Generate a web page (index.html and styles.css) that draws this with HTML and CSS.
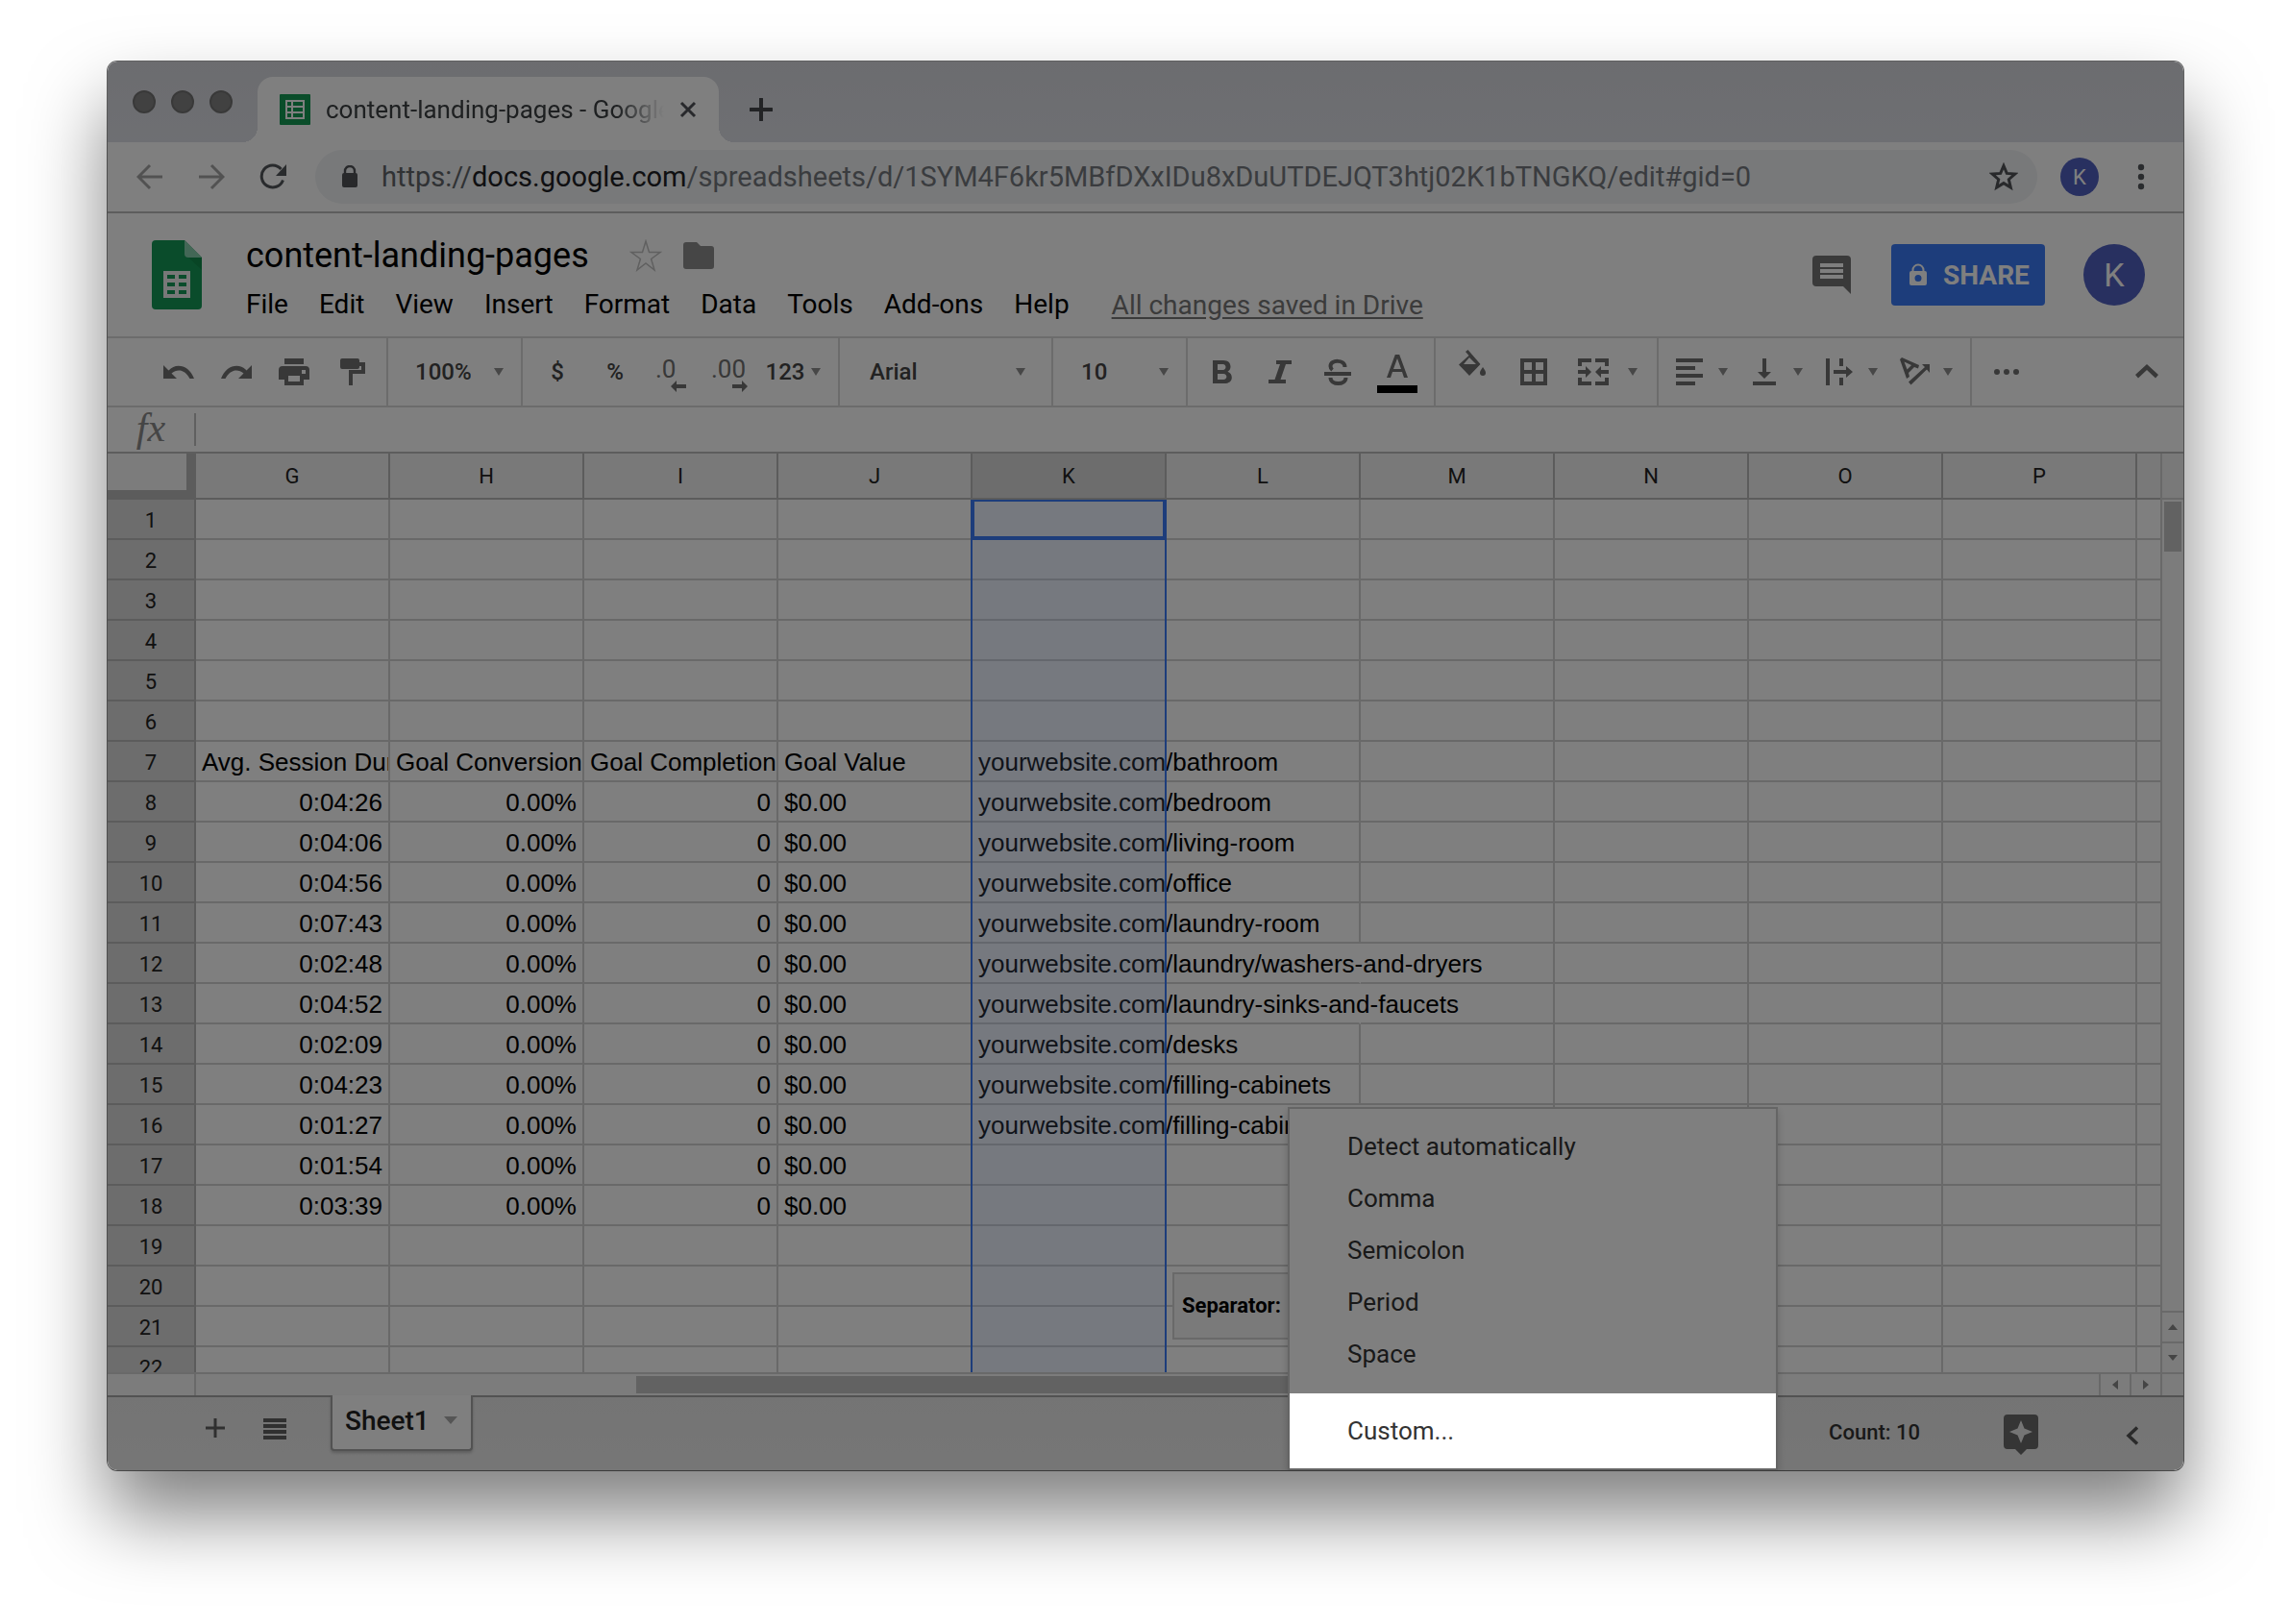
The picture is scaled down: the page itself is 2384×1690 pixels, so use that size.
FILE: index.html
```html
<!DOCTYPE html>
<html lang="en">
<head>
<meta charset="utf-8">
<title>content-landing-pages - Google Sheets</title>
<link rel="stylesheet" href="styles.css">
</head>
<body>
<svg width="0" height="0" class="defs" aria-hidden="true">
  <symbol id="caret" viewBox="0 0 12 10"><path d="M1 1h10L6 9z"/></symbol>
</svg>
<div class="window">
  <header class="tabstrip">
    <div class="lights"><i></i><i></i><i></i></div>
    <div class="tab">
      <svg class="favicon" viewBox="0 0 32 32"><rect width="32" height="32" rx="1" fill="#149a55"/><path fill="#fff" d="M6 6h20v20H6z"/><path fill="#149a55" d="M8 8h4v4H8zM14 8h10v4H14zM8 14h4v4H8zM14 14h10v4H14zM8 20h4v4H8zM14 20h10v4H14z"/></svg>
      <span class="tab-title">content-landing-pages - Google Sheets</span>
      <button class="plain" aria-label="Close tab"><svg width="18" height="18" viewBox="0 0 18 18"><path d="M2 2l14 14M16 2L2 16" stroke="#505258" stroke-width="3"/></svg></button>
    </div>
    <button class="plain new-tab" aria-label="New tab"><svg width="24" height="24" viewBox="0 0 24 24"><path d="M12 1v22M1 12h22" stroke="#44464a" stroke-width="4" stroke-linecap="round"/></svg></button>
  </header>

  <div class="navbar">
    <button class="plain nav" aria-label="Back"><svg width="28" height="28" viewBox="0 0 28 28"><path d="M27 14H3M14 2L2 14l12 12" fill="none" stroke="#a5a5a5" stroke-width="3"/></svg></button>
    <button class="plain nav" aria-label="Forward"><svg width="28" height="28" viewBox="0 0 28 28"><path d="M1 14h24M14 2l12 12-12 12" fill="none" stroke="#a5a5a5" stroke-width="3"/></svg></button>
    <button class="plain nav" aria-label="Reload"><svg width="28" height="28" viewBox="0 0 28 28"><path d="M24.500 17.500A11.500 11.500 0 1 1 22.500 6" fill="none" stroke="#53565b" stroke-width="3"/><path d="M28 1v12H17z" fill="#53565b"/></svg></button>
    <div class="omnibox">
      <svg width="18" height="24" viewBox="0 0 18 24"><path d="M4 9V6a5 5 0 0 1 10 0v3" fill="none" stroke="#505357" stroke-width="2.400"/><rect x="1" y="8" width="16" height="15" rx="2" fill="#505357"/></svg>
      <span class="url"><span class="scheme">https://</span><span class="host">docs.google.com</span>/spreadsheets/d/1SYM4F6kr5MBfDXxIDu8xDuUTDEJQT3htj02K1bTNGKQ/edit#gid=0</span>
      <button class="plain" aria-label="Bookmark"><svg width="30" height="30" viewBox="0 0 30 30"><path d="M15 3.500l3.300 7.900 8.500.7-6.500 5.600 2 8.300-7.300-4.400L7.700 26l2-8.300-6.500-5.600 8.500-.7z" fill="none" stroke="#505357" stroke-width="3"/></svg></button>
    </div>
    <button class="plain avatar small">K</button>
    <button class="plain kebab" aria-label="Menu"><svg width="8" height="28" viewBox="0 0 8 28"><circle cx="4" cy="4" r="3.200"/><circle cx="4" cy="14" r="3.200"/><circle cx="4" cy="24" r="3.200"/></svg></button>
  </div>

  <div class="dochead">
    <svg class="logo" width="52" height="72" viewBox="0 0 52 72"><path d="M4 0h30l18 18v50a4 4 0 0 1-4 4H4a4 4 0 0 1-4-4V4a4 4 0 0 1 4-4z" fill="#159957"/><path d="M37 17l15 14V18z" fill="#118a4b"/><path d="M34 0l18 18H38a4 4 0 0 1-4-4z" fill="#87ceac"/><path d="M12 32h28v28H12z" fill="#f1f1f1"/><path d="M16 36h8v4h-8zM28 36h8v4h-8zM16 44h8v4h-8zM28 44h8v4h-8zM16 52h8v4h-8zM28 52h8v4h-8z" fill="#159957"/></svg>
    <div class="docinfo">
      <div class="titleline">
        <h1>content-landing-pages</h1>
        <button class="plain" aria-label="Star"><svg width="34" height="34" viewBox="0 0 34 34"><path d="M17 2l3.500 11.500H32l-9.400 7L26 32l-9-7-9 7 3.400-11.500-9.400-7h11.500z" fill="none" stroke="#c0c0c0" stroke-width="1.500"/></svg></button>
        <button class="plain" aria-label="Move to folder"><svg width="32" height="28" viewBox="0 0 32 28"><path d="M3 0h11l4 4h11a3 3 0 0 1 3 3v18a3 3 0 0 1-3 3H3a3 3 0 0 1-3-3V3a3 3 0 0 1 3-3z" fill="#8c8c8c"/></svg></button>
      </div>
      <nav class="menubar">
        <button class="plain">File</button><button class="plain">Edit</button><button class="plain">View</button><button class="plain">Insert</button><button class="plain">Format</button><button class="plain">Data</button><button class="plain">Tools</button><button class="plain">Add-ons</button><button class="plain">Help</button>
        <a href="#history">All changes saved in Drive</a>
      </nav>
    </div>
    <div class="docactions">
      <button class="plain comments" aria-label="Comments"><svg width="40" height="40" viewBox="0 0 40 40"><path d="M4 0h32a4 4 0 0 1 4 4v36l-8-8H4a4 4 0 0 1-4-4V4a4 4 0 0 1 4-4z" fill="#757575"/><path d="M8 8h24v4H8zM8 14h24v4H8zM8 20h24v4H8z" fill="#fff"/></svg></button>
      <button class="share"><svg width="18" height="24" viewBox="0 0 18 24"><path d="M3.500 9V7a5.500 5.500 0 0 1 11 0v2" fill="none" stroke="#fff" stroke-width="2"/><path fill="#fff" fill-rule="evenodd" d="M2 8h14a2 2 0 0 1 2 2v11a2 2 0 0 1-2 2H2a2 2 0 0 1-2-2V10a2 2 0 0 1 2-2zm7 4a3.500 3.500 0 1 0 0 7 3.500 3.500 0 0 0 0-7z"/></svg>SHARE</button>
      <button class="plain avatar">K</button>
    </div>
  </div>

  <div class="toolbar">
    <div class="group g-edit">
      <button class="tool" aria-label="Undo"><svg class="ic" viewBox="0 0 36 36"><path d="M2 11v14h14l-5.500-5.500c6-5 14-4 19 5.500h4.500C29 11 15 8 7.500 16.500z"/></svg></button>
      <button class="tool" aria-label="Redo"><svg class="ic" viewBox="0 0 36 36"><path d="M34 11v14H20l5.500-5.500c-6-5-14-4-19 5.500H2C7 11 21 8 28.500 16.500z"/></svg></button>
      <button class="tool" aria-label="Print"><svg class="ic" viewBox="0 0 36 36"><path d="M8 4h20v6H8z"/><path fill-rule="evenodd" d="M6 12h24a4 4 0 0 1 4 4v10h-6v6H8v-6H2V16a4 4 0 0 1 4-4zm6 10v6h12v-6zm14-6v4h4v-4z"/></svg></button>
      <button class="tool" aria-label="Paint format"><svg class="ic" viewBox="-2 0 36 36"><path d="M6 4h16a2 2 0 0 1 2 2v2h6v12H17v12h-4V16h13v-4h-2v1a2 2 0 0 1-2 2H6a2 2 0 0 1-2-2V6a2 2 0 0 1 2-2z"/></svg></button>
    </div>
    <div class="group g-zoom"><select aria-label="Zoom"><option>100%</option></select><svg class="caret"><use href="#caret"/></svg></div>
    <div class="group g-format">
      <button class="tool txt">$</button>
      <button class="tool txt">%</button>
      <button class="tool" aria-label="Decrease decimal places"><svg class="ic" viewBox="0 0 36 36"><text x="0" y="24">.0</text><path d="M16 33l6-6v4h10v4H22v4z"/></svg></button>
      <button class="tool" aria-label="Increase decimal places"><svg class="ic" viewBox="0 0 36 36"><text x="-2" y="24">.00</text><path d="M36 33l-6-6v4H20v4h10v4z"/></svg></button>
      <button class="tool txt more-formats">123<svg class="caret"><use href="#caret"/></svg></button>
    </div>
    <div class="group g-font"><select aria-label="Font"><option>Arial</option></select><svg class="caret"><use href="#caret"/></svg></div>
    <div class="group g-size"><select aria-label="Font size"><option>10</option></select><svg class="caret"><use href="#caret"/></svg></div>
    <div class="group g-style">
      <button class="tool" aria-label="Bold"><svg class="ic" viewBox="0 0 36 36"><path fill-rule="evenodd" d="M8 6h11c5 0 7.500 2.800 7.500 6.500 0 2.500-1.200 4.200-3 5.200 2.600 1 4.300 3 4.300 6 0 4-3 6.300-7.800 6.300H8zm5 4v6h5.500c4 0 4-6 0-6zm0 10v6h6c4.500 0 4.500-6 0-6z"/></svg></button>
      <button class="tool" aria-label="Italic"><svg class="ic" viewBox="0 0 36 36"><path d="M14 6h16v4h-6l-5.500 16H24v4H6v-4h6.500L18 10h-4z"/></svg></button>
      <button class="tool" aria-label="Strikethrough"><svg class="ic" viewBox="0 0 36 36"><path d="M4 18h28v4H4z"/><path d="M25.500 13C25.500 5 10.500 5 10.500 12q0 2.500 2 4M10.500 24c0 8 16 8 16 0" fill="none" stroke="#707070" stroke-width="4"/></svg></button>
      <button class="tool wide" aria-label="Text color"><svg width="42" height="44" viewBox="0 0 42 44"><path fill-rule="evenodd" d="M18.800 4h4.400L32 28h-4l-2-6H16l-2 6h-4zM21 8l-4 11h8z"/><path d="M0 36h42v8H0z" fill="#000"/></svg></button>
    </div>
    <div class="group g-cell">
      <button class="tool wide" aria-label="Fill color"><svg class="ic raised" viewBox="0 0 36 36"><path fill-rule="evenodd" d="M11 3l2.500-2L26.500 16 15 28 4 16.500 14.500 7zM15 9l-6 7h13z"/><path d="M29 19c2 3 3 4.500 3 6a3 3 0 0 1-6 0c0-1.500 1-3 3-6z"/></svg></button>
      <button class="tool wide" aria-label="Borders"><svg class="ic" viewBox="0 0 36 36"><path fill-rule="evenodd" d="M4 4h28v28H4zm4 4v8h8V8zm12 0v8h8V8zM8 20v8h8v-8zm12 0v8h8v-8z"/></svg></button>
      <button class="tool" aria-label="Merge cells"><svg class="ic" viewBox="0 0 36 36"><path d="M2 4h14v4H6v4H2zM20 4h14v8h-4V8H20zM2 24h4v4h10v4H2zM30 24h4v8H20v-4h10zM2 16h8v-4l6 6-6 6v-4H2zM34 16h-8v-4l-6 6 6 6v-4h8z"/></svg></button>
      <svg class="caret"><use href="#caret"/></svg>
    </div>
    <div class="group g-align">
      <button class="pair" aria-label="Horizontal align"><svg class="ic" viewBox="0 0 36 36"><path d="M4 4h28v4H4zM4 12h20v4H4zM4 20h28v4H4zM4 28h20v4H4z"/></svg><svg class="caret"><use href="#caret"/></svg></button>
      <button class="pair" aria-label="Vertical align"><svg class="ic" viewBox="0 0 36 36"><path d="M16 4h4v14h5l-7 7-7-7h5zM6 28h24v4H6z"/></svg><svg class="caret"><use href="#caret"/></svg></button>
      <button class="pair" aria-label="Text wrapping"><svg class="ic" viewBox="0 0 36 36"><path d="M4 4h4v28H4zM18 4h4v8h-4zM18 24h4v8h-4zM12 16h13v-4l7 6-7 6v-4H12z"/></svg><svg class="caret"><use href="#caret"/></svg></button>
      <button class="pair" aria-label="Text rotation"><svg class="ic" viewBox="0 0 36 36"><path fill-rule="evenodd" d="M5 3l18 8-1 3.500-4-1.500-6 6 1 4-3 2L3 5zM7.500 7.500l3 8 4.500-4.500z"/><path d="M12 28.500L29 13l-3-3h8v9l-3-3.500-16.500 16z"/></svg><svg class="caret"><use href="#caret"/></svg></button>
    </div>
    <button class="tool" aria-label="More"><svg class="ic" viewBox="0 0 36 36"><circle cx="8" cy="18" r="3"/><circle cx="18" cy="18" r="3"/><circle cx="28" cy="18" r="3"/></svg></button>
    <button class="tool collapse" aria-label="Hide the menus"><svg class="ic" viewBox="0 0 36 36"><path d="M18 10l12 11-3 3.500L18 16l-9 8.500L6 21z"/></svg></button>
  </div>

  <div class="formula"><label for="fx">fx</label><input id="fx" type="text"></div>

  <div class="sheet">
    <div class="grid">
      <table>
        <colgroup><col class="c-row"><col span="10" class="c-data"><col></colgroup>
        <thead><tr><td class="corner"><th>G<th>H<th>I<th>J<th class="on">K<th>L<th>M<th>N<th>O<th>P<th></tr></thead>
        <tbody>
          <tr><th>1<td><td><td><td><td><td><td><td><td><td><td></tr>
          <tr><th>2<td><td><td><td><td><td><td><td><td><td><td></tr>
          <tr><th>3<td><td><td><td><td><td><td><td><td><td><td></tr>
          <tr><th>4<td><td><td><td><td><td><td><td><td><td><td></tr>
          <tr><th>5<td><td><td><td><td><td><td><td><td><td><td></tr>
          <tr><th>6<td><td><td><td><td><td><td><td><td><td><td></tr>
          <tr><th>7<td class="cut">Avg. Session Duration<td class="cut">Goal Conversion Rate<td class="cut">Goal Completions<td>Goal Value<td class="spill">yourwebsite.com/bathroom<td><td><td><td><td><td></tr>
          <tr><th>8<td class="num">0:04:26<td class="num">0.00%<td class="num">0<td>$0.00<td class="spill">yourwebsite.com/bedroom<td><td><td><td><td><td></tr>
          <tr><th>9<td class="num">0:04:06<td class="num">0.00%<td class="num">0<td>$0.00<td class="spill">yourwebsite.com/living-room<td><td><td><td><td><td></tr>
          <tr><th>10<td class="num">0:04:56<td class="num">0.00%<td class="num">0<td>$0.00<td class="spill">yourwebsite.com/office<td><td><td><td><td><td></tr>
          <tr><th>11<td class="num">0:07:43<td class="num">0.00%<td class="num">0<td>$0.00<td class="spill">yourwebsite.com/laundry-room<td><td><td><td><td><td></tr>
          <tr><th>12<td class="num">0:02:48<td class="num">0.00%<td class="num">0<td>$0.00<td class="spill">yourwebsite.com/laundry/washers-and-dryers<td class="under"><td><td><td><td><td></tr>
          <tr><th>13<td class="num">0:04:52<td class="num">0.00%<td class="num">0<td>$0.00<td class="spill">yourwebsite.com/laundry-sinks-and-faucets<td class="under"><td><td><td><td><td></tr>
          <tr><th>14<td class="num">0:02:09<td class="num">0.00%<td class="num">0<td>$0.00<td class="spill">yourwebsite.com/desks<td><td><td><td><td><td></tr>
          <tr><th>15<td class="num">0:04:23<td class="num">0.00%<td class="num">0<td>$0.00<td class="spill">yourwebsite.com/filling-cabinets<td><td><td><td><td><td></tr>
          <tr><th>16<td class="num">0:01:27<td class="num">0.00%<td class="num">0<td>$0.00<td class="spill">yourwebsite.com/filling-cabinets<td class="under"><td><td><td><td><td></tr>
          <tr><th>17<td class="num">0:01:54<td class="num">0.00%<td class="num">0<td>$0.00<td><td><td><td><td><td><td></tr>
          <tr><th>18<td class="num">0:03:39<td class="num">0.00%<td class="num">0<td>$0.00<td><td><td><td><td><td><td></tr>
          <tr><th>19<td><td><td><td><td><td><td><td><td><td><td></tr>
          <tr><th>20<td><td><td><td><td><td><td><td><td><td><td></tr>
          <tr><th>21<td><td><td><td><td><td><td><td><td><td><td></tr>
          <tr><th>22<td><td><td><td><td><td><td><td><td><td><td></tr>
        </tbody>
      </table>
      <div class="selection"><div class="active"></div></div>
      <div class="separator">Separator:</div>
    </div>
    <div class="vscroll">
      <div class="vhead"></div>
      <div class="vtrack"><div class="vthumb"></div></div>
      <button class="step" aria-label="Scroll up"><svg width="12" height="8" viewBox="0 0 12 8"><path d="M1 7h10L6 1z"/></svg></button>
      <button class="step" aria-label="Scroll down"><svg width="12" height="8" viewBox="0 0 12 8"><path d="M1 1h10L6 7z"/></svg></button>
    </div>
  </div>

  <div class="hscroll">
    <div class="hhead"></div>
    <div class="htrack"><div class="hthumb"></div></div>
    <button class="step" aria-label="Scroll left"><svg width="8" height="12" viewBox="0 0 8 12"><path d="M7 1v10L1 6z"/></svg></button>
    <button class="step" aria-label="Scroll right"><svg width="8" height="12" viewBox="0 0 8 12"><path d="M1 1v10l6-5z"/></svg></button>
    <div class="hcorner"></div>
  </div>

  <footer class="bottombar">
    <button class="plain add" aria-label="Add sheet"><svg width="20" height="20" viewBox="0 0 20 20"><path d="M8.500 0h3v8.500H20v3h-8.500V20h-3v-8.500H0v-3h8.500z" fill="#606060"/></svg></button>
    <button class="plain all" aria-label="All sheets"><svg width="24" height="24" viewBox="0 0 24 24"><path d="M0 1h24v4H0zM0 7h24v4H0zM0 13h24v4H0zM0 19h24v4H0z" fill="#606060"/></svg></button>
    <button class="sheet-tab">Sheet1<svg width="14" height="8" viewBox="0 0 14 8"><path d="M0 0h14L7 8z" fill="#aaa"/></svg></button>
    <span class="count">Count: 10</span>
    <button class="plain explore" aria-label="Explore"><svg width="36" height="42" viewBox="0 0 36 42"><path d="M4 0h28a4 4 0 0 1 4 4v28a4 4 0 0 1-4 4h-8l-6 6-6-6H4a4 4 0 0 1-4-4V4a4 4 0 0 1 4-4z" fill="#6a6a6a"/><path d="M18 6l3.500 8.500L30 18l-8.500 3.500L18 30l-3.500-8.500L6 18l8.500-3.500z" fill="#ebebeb"/></svg></button>
    <button class="plain side" aria-label="Show side panel"><svg width="14" height="20" viewBox="0 0 14 20"><path d="M12 1.500L3 10l9 8.500" fill="none" stroke="#555" stroke-width="3.500"/></svg></button>
  </footer>

  <div class="menu" role="menu">
    <div class="menu-part">
      <button role="menuitem">Detect automatically</button>
      <button role="menuitem">Comma</button>
      <button role="menuitem">Semicolon</button>
      <button role="menuitem">Period</button>
      <button role="menuitem">Space</button>
    </div>
    <div class="menu-part spotlight"><button role="menuitem">Custom...</button></div>
  </div>
</div>
</body>
</html>
```
FILE: styles.css
```css
* { box-sizing: border-box; }

body {
  margin: 0;
  height: 100vh;
  padding: 64px 112px 160px;
  background: #fff;
  font-family: Roboto, Arial, sans-serif;
  color: #000;
}

.defs { position: absolute; }
svg { display: block; flex: none; }
button { font-family: inherit; color: inherit; }

.plain, .tool, .pair, .step {
  display: flex;
  align-items: center;
  justify-content: center;
  padding: 0;
  border: 0;
  background: none;
}

.window {
  position: relative;
  display: flex;
  flex-direction: column;
  height: 100%;
  overflow: hidden;
  border-radius: 10px;
  background: #fff;
  box-shadow: 0 0 0 1px rgba(0, 0, 0, .6), 0 46px 80px rgba(0, 0, 0, .5);
}

/* dims everything except the spotlighted menu entry */
.window::after {
  content: "";
  position: absolute;
  inset: 0;
  z-index: 5;
  background: rgba(0, 0, 0, .5);
  pointer-events: none;
}

/* browser tabs */
.tabstrip {
  display: flex;
  align-items: flex-end;
  flex: none;
  height: 84px;
  background: linear-gradient(#d8d9df, #dddfe6);
}
.lights { display: flex; gap: 16px; padding: 0 26px 30px 26px; }
.lights i {
  width: 24px;
  height: 24px;
  border: 2px solid #727272;
  border-radius: 50%;
  background: #838383;
}
.tab {
  position: relative;
  display: flex;
  align-items: center;
  width: 480px;
  height: 68px;
  padding: 0 23px;
  border-radius: 16px 16px 0 0;
  background: #fff;
}
.tab::before, .tab::after {
  content: "";
  position: absolute;
  bottom: 0;
  width: 16px;
  height: 16px;
}
.tab::before { right: 100%; background: radial-gradient(circle at 0 0, transparent 16px, #fff 16px); }
.tab::after { left: 100%; background: radial-gradient(circle at 100% 0, transparent 16px, #fff 16px); }
.favicon { width: 32px; height: 32px; }
.tab-title {
  flex: 1;
  margin: 0 16px;
  overflow: hidden;
  white-space: nowrap;
  font-size: 26px;
  color: #3c4043;
  -webkit-mask-image: linear-gradient(to left, transparent, #000 50px);
  mask-image: linear-gradient(to left, transparent, #000 50px);
}
.new-tab { height: 68px; margin-left: 32px; }

/* address row */
.navbar {
  display: flex;
  align-items: center;
  flex: none;
  height: 74px;
  padding: 0 40px 0 12px;
  border-bottom: 2px solid #bbb;
  background: #fff;
}
.nav { width: 64px; height: 56px; }
.nav + .omnibox { margin-left: 12px; }
.omnibox {
  display: flex;
  align-items: center;
  flex: 1;
  height: 56px;
  padding: 0 20px 0 27px;
  border-radius: 28px;
  background: #f0f2f4;
}
.url {
  flex: 1;
  margin-left: 24px;
  white-space: nowrap;
  font-size: 29px;
  color: #75797e;
}
.scheme { color: #606468; }
.host { color: #202124; }
.avatar {
  width: 64px;
  height: 64px;
  border-radius: 50%;
  background: #5161c0;
  color: #fff;
  font-size: 34px;
}
.avatar.small { width: 40px; height: 40px; margin: 0 40px 0 24px; font-size: 22px; }
.kebab { fill: #55585c; }

/* document header */
.dochead {
  display: flex;
  align-items: center;
  flex: none;
  height: 130px;
  padding: 0 40px 0 46px;
  border-bottom: 2px solid #d8d8d8;
}
.docinfo { flex: 1; margin-left: 46px; padding-top: 14px; }
.titleline { display: flex; align-items: center; height: 48px; }
h1 { margin: 0 42px 0 0; font-size: 36px; font-weight: 400; line-height: 48px; }
.titleline button + button { margin-left: 22px; }
.menubar { display: flex; gap: 32px; height: 54px; align-items: center; font-size: 28px; }
.menubar button { font-size: 28px; line-height: 32px; }
.menubar a { margin-left: 12px; color: #777; text-underline-offset: 3px; }
.docactions { display: flex; align-items: center; gap: 40px; }
.comments { margin-right: 2px; }
.share {
  display: flex;
  align-items: center;
  justify-content: center;
  gap: 17px;
  width: 160px;
  height: 64px;
  padding: 0 0 0 3px;
  border: 0;
  border-radius: 4px;
  background: #3a7bf6;
  color: #fff;
  font-size: 28px;
  font-weight: 700;
}

/* toolbar */
.toolbar {
  display: flex;
  align-items: center;
  flex: none;
  height: 72px;
  border-bottom: 2px solid #d8d8d8;
  fill: #707070;
}
.group {
  display: flex;
  align-items: center;
  height: 70px;
  border-right: 2px solid #d8d8d8;
}
.tool { width: 60px; height: 60px; }
.tool.wide { width: 64px; }
.ic { width: 36px; height: 36px; overflow: visible; }
.ic text { font-size: 26px; }
.raised { margin-bottom: 12px; }
.caret { width: 12px; height: 10px; fill: #8f8f8f; }
.txt, .toolbar select { font-size: 24px; font-weight: 500; color: #444; }
.toolbar select {
  appearance: none;
  padding: 0;
  border: 0;
  background: none;
  font-family: inherit;
}
.g-edit { width: 292px; padding-left: 44px; }
.g-zoom { width: 140px; padding-left: 28px; }
.g-zoom select { width: 58px; margin-right: 23px; }
.g-format { width: 330px; padding-left: 6px; }
.more-formats { width: 72px; gap: 6px; }
.g-font { width: 222px; padding-left: 31px; }
.g-font select { width: 151px; }
.g-size { width: 140px; padding-left: 29px; }
.g-size select { width: 80px; }
.g-style { width: 258px; padding-left: 6px; }
.g-cell { width: 232px; padding-left: 6px; }
.g-cell .caret { margin-left: 5px; }
.g-align { width: 326px; gap: 20px; padding-left: 14px; }
.pair { width: 58px; height: 60px; gap: 11px; }
.toolbar > .tool { margin-left: 6px; }
.toolbar > .collapse { margin-left: auto; margin-right: 8px; }

/* formula bar */
.formula {
  display: flex;
  align-items: center;
  flex: none;
  height: 48px;
  border-bottom: 2px solid #bbb;
}
.formula label {
  width: 90px;
  padding-bottom: 4px;
  text-align: center;
  font: italic 42px/34px "Liberation Serif", serif;
  color: #8a8a8a;
}
.formula input {
  flex: 1;
  height: 34px;
  border: 0;
  border-left: 2px solid #c0c0c0;
  background: none;
}

/* grid */
.sheet { display: flex; flex: 1; min-height: 0; }
.grid { position: relative; flex: 1; overflow: hidden; }
table { width: 100%; table-layout: fixed; border-collapse: separate; border-spacing: 0; }
.c-row { width: 92px; }
.c-data { width: 202px; }
tr { height: 42px; }
thead tr { height: 48px; }
td, th {
  height: 42px;
  padding: 0;
  border-right: 2px solid #d2d2d2;
  border-bottom: 2px solid #d2d2d2;
}
td {
  padding: 2px 6px 0;
  font: 26px/38px "Liberation Sans", Arial, sans-serif;
  white-space: nowrap;
}
th { padding-top: 2px; font-size: 22px; font-weight: 400; color: #222; border-color: #b9b9b9; background: #dadada; }
thead th { height: 48px; padding-top: 0; background: #f2f2f2; }
thead .on { background: #dadada; }
td:last-child, th:last-child { border-right: 0; }
.corner {
  border-right: 10px solid #b9b9b9;
  border-bottom: 10px solid #b9b9b9;
  background: #f8f8f8;
}
.cut { overflow: hidden; padding-right: 0; }
.num { text-align: right; }
.spill { overflow: visible; }
.under { border-right-color: transparent; }

.selection {
  position: absolute;
  top: 48px;
  bottom: 0;
  left: 898px;
  width: 204px;
  border: solid #3a7bf6;
  border-width: 0 2px;
  background: rgba(160, 190, 255, .2);
}
.active { height: 42px; border: solid #3a7bf6; border-width: 2px 2px 4px; }
.separator {
  position: absolute;
  left: 1108px;
  bottom: 34px;
  width: 240px;
  height: 70px;
  padding-left: 8px;
  border: 2px solid #d2d2d2;
  background: #f5f5f5;
  font-size: 22px;
  font-weight: 700;
  line-height: 66px;
}

/* scroll bars */
.vscroll {
  display: flex;
  flex-direction: column;
  width: 24px;
  border-left: 2px solid #d2d2d2;
  background: #f8f8f8;
}
.vhead { height: 48px; border-bottom: 2px solid #d2d2d2; background: #f2f2f2; }
.vtrack { flex: 1; padding: 2px; }
.vthumb { height: 52px; background: #c4c4c4; }
.step { fill: #8a8a8a; }
.vscroll .step { height: 32px; border-top: 2px solid #d2d2d2; }
.hscroll {
  display: flex;
  flex: none;
  height: 26px;
  border-top: 2px solid #d2d2d2;
  border-bottom: 2px solid #a4a4a4;
  background: #f8f8f8;
}
.hhead { width: 92px; border-right: 2px solid #d2d2d2; }
.htrack { flex: 1; padding: 2px 0; }
.hthumb { width: 900px; height: 18px; margin-left: 458px; background: #c4c4c4; }
.hscroll .step { width: 32px; border-left: 2px solid #d2d2d2; }
.hcorner { width: 24px; border-left: 2px solid #d2d2d2; }

/* sheet tabs */
.bottombar {
  display: flex;
  align-items: center;
  flex: none;
  height: 76px;
  padding-right: 46px;
  background: linear-gradient(#e9e9e9, #ededed);
}
.add { margin: 0 40px 12px 102px; }
.all { margin: 0 46px 10px 0; }
.sheet-tab {
  display: flex;
  align-items: center;
  align-self: flex-start;
  justify-content: space-between;
  width: 148px;
  height: 58px;
  margin-top: -2px;
  padding: 0 14px 4px 13px;
  border: 2px solid #a4a4a4;
  border-top: 0;
  border-radius: 0 0 4px 4px;
  background: #fff;
  box-shadow: 0 2px 3px rgba(0, 0, 0, .2);
  font-size: 28px;
  font-weight: 500;
  color: #222;
}
.count { margin-left: auto; margin-right: 87px; padding-bottom: 4px; font-size: 22px; font-weight: 500; color: #333; }
.explore { padding-top: 2px; margin-right: 91px; }
.side { padding-top: 4px; }

/* separator menu */
.menu {
  position: absolute;
  right: 422px;
  bottom: 0;
  width: 510px;
  border: 2px solid #cbcbcb;
  background: #fff;
  box-shadow: 0 4px 8px rgba(0, 0, 0, .2);
}
.menu-part { padding: 12px 0; }
.menu button {
  display: block;
  width: 100%;
  height: 54px;
  padding: 0 60px;
  border: 0;
  background: none;
  text-align: left;
  font-size: 26px;
  color: #333;
}
.menu-part + .menu-part { margin-top: 2px; }
.spotlight {
  position: relative;
  z-index: 6;
  background: #fff;
}
```
